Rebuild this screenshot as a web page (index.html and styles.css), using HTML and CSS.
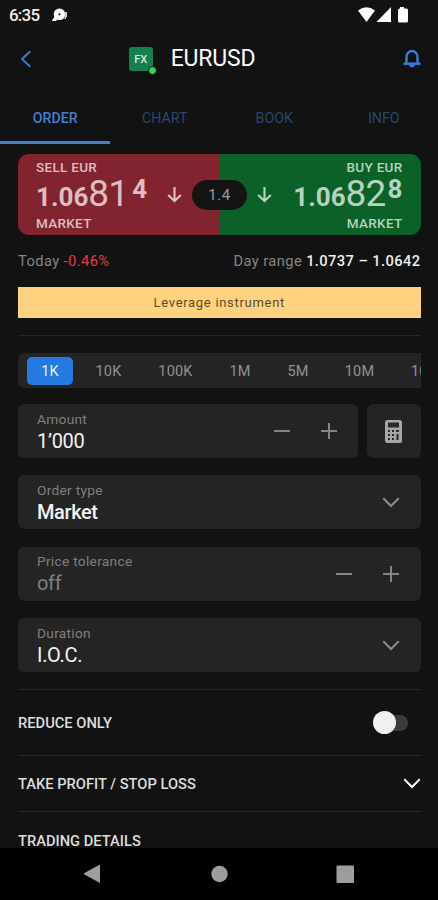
FILE: index.html
```html
<!DOCTYPE html>
<html lang="en">
<head>
    <meta charset="UTF-8">
    <meta name="viewport" content="width=device-width, initial-scale=1.0">
    <title>EURUSD</title>
    <link rel="stylesheet" href="styles.css">
</head>
<body>
<div id="app">
    <div class="status">
        <span class="time">6:35</span>
        <svg class="note" width="17" height="14" viewBox="0 0 17 14"><path d="M0 12.500L3 8l3 3-2 2H0z" fill="#fff"/><circle cx="7.500" cy="6.300" r="5.800" fill="#fff"/><circle cx="7.500" cy="6.300" r="1.100" fill="#121212"/><path d="M12.500 4H15v5h-1v2h-1.500z" fill="#ccc"/></svg>
        <svg class="signals" width="52" height="16" viewBox="0 0 52 16"><path d="M0 3.500Q8.500-3 17 3.500L8.500 15z"/><path d="M33 0v15H18.500z"/><path d="M42 1.500V0h4v1.500h2.500q1.500 0 1.500 1.500v11q0 1.500-1.500 1.500h-7Q40 15.500 40 14V3q0-1.500 1.500-1.500z"/></svg>
    </div>
    <header>
        <svg class="back" width="12" height="18" viewBox="0 0 12 18"><path d="M10.300 1.200L2 9l8.300 7.800"/></svg>
        <div class="title">
            <span class="fx">FX<i></i></span>
            <h1>EURUSD</h1>
        </div>
        <svg class="bell" width="18" height="19" viewBox="0 0 18 19"><path d="M3.500 14.500V8a5.500 6 0 0 1 11 0v6.500"/><path d="M.5 14.700h17"/><path class="clapper" d="M6 15.500h6q-.5 3-3 3t-3-3z"/></svg>
    </header>
    <nav class="tabs">
        <a class="active">ORDER</a>
        <a>CHART</a>
        <a>BOOK</a>
        <a>INFO</a>
    </nav>
    <main>
        <section class="quote">
            <div class="side sell">
                <span class="label">SELL EUR</span>
                <div class="price"><b>1.06</b><span class="big">81</span><b class="sup">4</b></div>
                <span class="label">MARKET</span>
                <svg class="arrow" width="15" height="17" viewBox="0 0 15 17"><path d="M7.500 1v14M1.200 9l6.300 6 6.300-6"/></svg>
            </div>
            <div class="side buy">
                <span class="label">BUY EUR</span>
                <div class="price"><b>1.06</b><span class="big">82</span><b class="sup">8</b></div>
                <span class="label">MARKET</span>
                <svg class="arrow" width="15" height="17" viewBox="0 0 15 17"><path d="M7.500 1v14M1.200 9l6.300 6 6.300-6"/></svg>
            </div>
            <span class="spread">1.4</span>
        </section>
        <div class="range">
            <span>Today <em>-0.46%</em></span>
            <span>Day range <strong>1.0737 – 1.0642</strong></span>
        </div>
        <div class="banner">Leverage instrument</div>
        <hr>
        <div class="sizes">
            <span class="k1 on">1K</span>
            <span class="k10">10K</span>
            <span class="k100">100K</span>
            <span class="m1">1M</span>
            <span class="m5">5M</span>
            <span class="m10">10M</span>
            <span class="m100">100M</span>
        </div>
        <div class="row">
            <div class="field">
                <div><label>Amount</label><p>1’000</p></div>
                <svg class="step" width="64" height="18" viewBox="0 0 64 18"><path d="M0 9h16M47 9h16M55 1v16"/></svg>
            </div>
            <div class="calc">
                <svg width="17" height="23" viewBox="0 0 17 23"><rect width="17" height="23" rx="2.500" fill="#a6a6a6"/><path d="M3 2.500h11v5H3z" fill="#292929"/><path d="M3 11h2M7 11h2M11 11h3M3 15h2M7 15h2M3 19h2M7 19h2M12.500 14v6" stroke="#292929" stroke-width="2"/></svg>
            </div>
        </div>
        <div class="field">
            <div><label>Order type</label><p class="market">Market</p></div>
            <svg class="down" width="18" height="11" viewBox="0 0 18 11"><path d="M1.300 1.300L9 9l7.700-7.700"/></svg>
        </div>
        <div class="field off">
            <div><label>Price tolerance</label><p>off</p></div>
            <svg class="step" width="64" height="18" viewBox="0 0 64 18"><path d="M0 9h16M47 9h16M55 1v16"/></svg>
        </div>
        <div class="field">
            <div><label>Duration</label><p>I.O.C.</p></div>
            <svg class="down" width="18" height="11" viewBox="0 0 18 11"><path d="M1.300 1.300L9 9l7.700-7.700"/></svg>
        </div>
        <div class="line reduce">REDUCE ONLY<span class="toggle"></span></div>
        <div class="line profit">TAKE PROFIT / STOP LOSS
            <svg class="down" width="18" height="11" viewBox="0 0 18 11"><path d="M1.300 1.300L9 9l7.700-7.700"/></svg>
        </div>
        <div class="line details">TRADING DETAILS</div>
    </main>
    <footer>
        <svg class="keys" width="270" height="20" viewBox="0 0 270 20"><path d="M16 1.500v16.500q0 1-1 .5L0 10.300q-.5-.5 0-1L15 1q1-.5 1 .5z"/><circle cx="135.500" cy="10" r="8.200"/><rect x="252.500" y="1.500" width="17.500" height="17.500" rx="1"/></svg>
    </footer>
</div>
</body>
</html>
```
FILE: styles.css
```css
*{margin: 0;padding: 0;box-sizing: border-box;}
body{
    background: #121212;
    font-family: Roboto, sans-serif;
    color: #eee;
}
svg{display: block;flex: none;fill: none;}
#app{
    width: 438px;
    height: 900px;
    overflow: hidden;
    display: flex;
    flex-direction: column;
}
.status{
    height: 29px;
    flex: none;
    display: flex;
    align-items: center;
    padding: 0 28px 0 9px;
}
.time{font-size: 17px;font-weight: 500;width: 43px;letter-spacing: -.8px;}
.signals{margin-left: auto;fill: #fff;}
header{
    height: 59px;
    flex: none;
    display: flex;
    align-items: center;
    justify-content: space-between;
    padding: 0 17px 0 20px;
}
.back{stroke: #397dd7;stroke-width: 2;}
.title{display: flex;align-items: center;gap: 18px;margin-right: 51px;}
.fx{
    position: relative;
    width: 24px;
    height: 24px;
    border-radius: 3px;
    background: #148050;
    color: #d5eadf;
    font-size: 11px;
    font-weight: 500;
    line-height: 25px;
    text-align: center;
}
.fx i{
    position: absolute;
    right: -4px;
    bottom: -4px;
    width: 9px;
    height: 9px;
    border-radius: 50%;
    background: #3ece5f;
    border: 1px solid #121212;
}
h1{font-size: 23px;font-weight: 400;line-height: 30px;color: #fff;letter-spacing: -.2px;}
.bell{stroke: #397dd7;stroke-width: 2.4;}
.clapper{fill: #397dd7;stroke: none;}
.tabs{
    height: 56px;
    flex: none;
    display: flex;
}
.tabs a{
    flex: 1;
    text-align: center;
    font-size: 14.2px;
    line-height: 60px;
    padding-left: 1px;
    color: #2a476f;
    border-bottom: 3px solid transparent;
}
.tabs .active{color: #3f80d3;font-weight: 500;border-color: #447cce;}
main{
    height: 704px;
    flex: none;
    overflow: hidden;
    padding: 10px 17.5px 0 18px;
}
.quote{
    position: relative;
    display: flex;
    height: 81px;
    border-radius: 11px;
    overflow: hidden;
}
.side{
    position: relative;
    width: 50%;
    padding: 5px 18px 0;
    display: flex;
    flex-direction: column;
}
.sell{background: #81242f;color: #dfbdc0;}
.buy{background: #0b6128;color: #b7d2be;align-items: flex-end;}
.label{font-size: 13.5px;line-height: 17px;font-weight: 500;letter-spacing: .3px;}
.price{
    height: 39px;
    display: flex;
    align-items: baseline;
    line-height: 35px;
}
.price b{font-size: 26px;}
.price .big{font-size: 37px;font-weight: 400;letter-spacing: -.8px;}
.price .sup{align-self: flex-start;line-height: 26px;margin-left: 4px;}
.buy .sup{margin-left: 2px;}
.arrow{
    position: absolute;
    top: 32px;
    right: 37px;
    stroke: #dfbdc0;
    stroke-width: 2.2;
}
.buy .arrow{right: auto;left: 38px;stroke: #b7d2be;}
.spread{
    position: absolute;
    left: 174px;
    top: 26px;
    width: 55px;
    height: 30px;
    border-radius: 15px;
    background: #141414;
    color: #999;
    font-size: 15px;
    line-height: 31px;
    text-align: center;
    letter-spacing: .5px;
}
.range{
    height: 52px;
    display: flex;
    justify-content: space-between;
    font-size: 14.7px;
    line-height: 53px;
    color: #858585;
    letter-spacing: .4px;
}
.range em{color: #e73646;font-style: normal;}
.range strong{color: #eee;font-weight: 500;}
.banner{
    height: 31px;
    background: #ffd27f;
    color: #5c4b2d;
    font-size: 13px;
    line-height: 32px;
    text-align: center;
    letter-spacing: .7px;
}
hr{border: 0;height: 1px;background: #262626;margin: 17px 0;}
.sizes{
    height: 35px;
    display: flex;
    align-items: center;
    padding-left: 9px;
    border-radius: 6px 0 0 6px;
    background: #242424;
    overflow: hidden;
    font-size: 14.5px;
    color: #929292;
    letter-spacing: .2px;
}
.sizes span{
    flex: none;
    text-align: center;
    height: 28px;
    line-height: 29px;
}
.sizes .on{background: #257ae2;color: #e7f2ff;border-radius: 5px;}
.k1{width: 46px;}
.k10{width: 71px;}
.k100{width: 63px;}
.m1{width: 66px;}
.m5{width: 50px;}
.m10{width: 73px;}
.m100{padding-left: 15px;}
.row{display: flex;gap: 9px;margin-top: 16px;}
.row .field{flex: 1;margin: 0;}
.field{
    height: 54px;
    margin-top: 17.4px;
    padding: 0 20.5px 0 19px;
    border-radius: 6px;
    background: #242424;
    display: flex;
    align-items: center;
    justify-content: space-between;
}
.row .field{padding-right: 20px;}
.field label{
    display: block;
    padding-top: 4px;
    font-size: 13.7px;
    line-height: 16px;
    color: #808080;
    letter-spacing: .3px;
}
.field p{font-size: 20px;line-height: 29px;color: #f2f2f2;letter-spacing: -.3px;}
.field .market{font-weight: 500;letter-spacing: -.4px;}
.off p{color: #808080;}
.step{stroke: #858585;stroke-width: 2;}
.calc{
    width: 53.5px;
    height: 54px;
    border-radius: 6px;
    background: #242424;
    display: flex;
    align-items: center;
    justify-content: center;
}
.down{stroke: #8c8c8c;stroke-width: 2;}
.line{
    display: flex;
    align-items: center;
    justify-content: space-between;
    border-top: 1px solid #262626;
    font-size: 14.7px;
    font-weight: 500;
    color: #dedede;
}
.reduce{height: 66px;margin-top: 17.2px;}
.profit{height: 56px;}
.details{height: 58px;}
.line .down{stroke: #fff;}
.toggle{
    position: relative;
    width: 28px;
    height: 16px;
    margin-right: 13px;
    border-radius: 8px;
    background: #3b3b3b;
}
.toggle::after{
    content: '';
    position: absolute;
    left: -7px;
    top: -4px;
    width: 23px;
    height: 23px;
    border-radius: 50%;
    background: #f0f0f0;
}
footer{
    height: 52px;
    flex: none;
    background: #000;
    padding: 16px 0 0 84px;
}
.keys{fill: #9e9e9e;}
```
